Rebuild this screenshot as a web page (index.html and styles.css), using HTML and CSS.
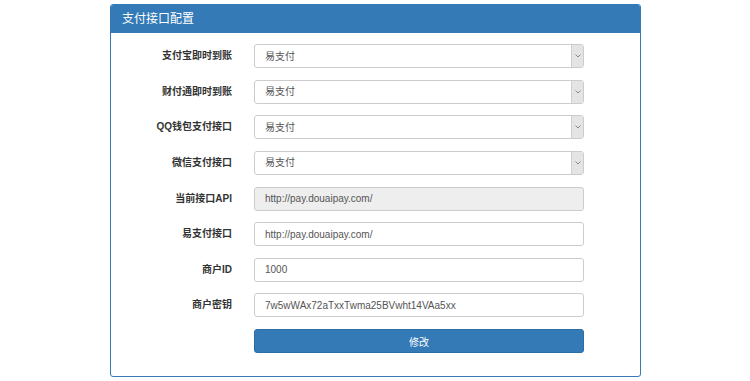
FILE: index.html
```html
<!DOCTYPE html>
<html lang="zh-CN">
<head>
<meta charset="utf-8">
<title>支付接口配置</title>
<link rel="stylesheet" href="styles.css">
</head>
<body>
<div class="panel">
  <div class="panel-heading">支付接口配置</div>
  <form class="panel-body">
    <label class="lbl">支付宝即时到账</label>
    <div class="select"><select><option>易支付</option></select><span class="arrow"><svg width="6" height="4" viewBox="0 0 6 4"><path d="M0.5 0.5 L3 3 L5.5 0.5" fill="none" stroke="#888" stroke-width="1"/></svg></span></div>

    <label class="lbl">财付通即时到账</label>
    <div class="select"><select><option>易支付</option></select><span class="arrow"><svg width="6" height="4" viewBox="0 0 6 4"><path d="M0.5 0.5 L3 3 L5.5 0.5" fill="none" stroke="#888" stroke-width="1"/></svg></span></div>

    <label class="lbl">QQ钱包支付接口</label>
    <div class="select"><select><option>易支付</option></select><span class="arrow"><svg width="6" height="4" viewBox="0 0 6 4"><path d="M0.5 0.5 L3 3 L5.5 0.5" fill="none" stroke="#888" stroke-width="1"/></svg></span></div>

    <label class="lbl">微信支付接口</label>
    <div class="select"><select><option>易支付</option></select><span class="arrow"><svg width="6" height="4" viewBox="0 0 6 4"><path d="M0.5 0.5 L3 3 L5.5 0.5" fill="none" stroke="#888" stroke-width="1"/></svg></span></div>

    <label class="lbl">当前接口API</label>
    <input class="input disabled" value="http://pay.douaipay.com/" disabled>

    <label class="lbl">易支付接口</label>
    <input class="input" value="http://pay.douaipay.com/">

    <label class="lbl">商户ID</label>
    <input class="input" value="1000">

    <label class="lbl">商户密钥</label>
    <input class="input" value="7w5wWAx72aTxxTwma25BVwht14VAa5xx">

    <span></span>
    <button type="button" class="btn">修改</button>
  </form>
</div>
</body>
</html>
```

FILE: styles.css
```css
* { box-sizing: border-box; }
body {
  margin: 0;
  background: #fff;
  font-family: "Liberation Sans", "Noto Sans CJK SC", sans-serif;
  color: #333;
}
.panel {
  margin: 4px 0 0 110px;
  width: 531px;
  border: 1px solid #337ab7;
  border-radius: 3px;
  overflow: hidden;
}
.panel-heading {
  height: 28px;
  background: #337ab7;
  color: #fff;
  font-size: 12px;
  line-height: 28px;
  padding-left: 11px;
}
.panel-body {
  margin: 0;
  padding: 11px 0 23px 0;
  display: grid;
  grid-template-columns: 121px 330px;
  column-gap: 22px;
  row-gap: 11.625px;
  grid-auto-rows: 24px;
}
.lbl {
  font-size: 10px;
  font-weight: bold;
  color: #333;
  text-align: right;
  line-height: 24px;
  white-space: nowrap;
}
.select {
  display: flex;
  border: 1px solid #ccc;
  border-radius: 3px;
  background: #fff;
  overflow: hidden;
}
.select select {
  flex: 1;
  appearance: none;
  -webkit-appearance: none;
  border: 0;
  background: transparent;
  font: inherit;
  font-size: 10px;
  color: #555;
  padding: 0 0 0 10px;
  outline: none;
}
.arrow {
  width: 12px;
  background: #e4e4e4;
  border-left: 1px solid #cfcfcf;
  display: flex;
  align-items: center;
  justify-content: center;
}
.input {
  border: 1px solid #ccc;
  border-radius: 3px;
  background: #fff;
  font: inherit;
  font-size: 10px;
  color: #555;
  padding: 0 0 0 10px;
  outline: none;
  height: 24px;
  width: 100%;
}
.input.disabled {
  background: #eee;
  color: #555;
  -webkit-text-fill-color: #555;
  opacity: 1;
}
.btn {
  background: #337ab7;
  border: 1px solid #2e6da4;
  border-radius: 3px;
  color: #fff;
  font: inherit;
  font-size: 10px;
  height: 24px;
  padding: 0;
}
```
